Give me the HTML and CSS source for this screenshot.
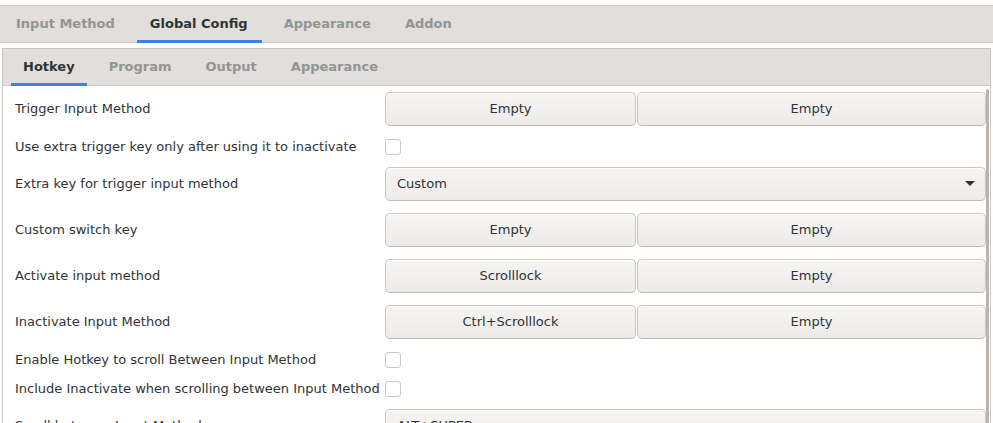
FILE: index.html
```html
<!DOCTYPE html>
<html>
<head>
<meta charset="utf-8">
<link rel="stylesheet" href="styles.css">
</head>
<body>
<div class="topbar">
  <div class="tab">Input Method</div>
  <div class="tab active wide">Global Config</div>
  <div class="tab">Appearance</div>
  <div class="tab">Addon</div>
</div>
<div class="panel">
  <div class="subbar">
    <div class="tab active">Hotkey</div>
    <div class="tab">Program</div>
    <div class="tab">Output</div>
    <div class="tab">Appearance</div>
  </div>
  <div class="content">
    <div class="form">
      <div class="label">Trigger Input Method</div>
      <div class="keys"><div class="btn first">Empty</div><div class="btn">Empty</div></div>

      <div class="label small">Use extra trigger key only after using it to inactivate</div>
      <div class="check-cell"><div class="check"></div></div>

      <div class="label">Extra key for trigger input method</div>
      <div class="combo"><span>Custom</span><span class="arrow"></span></div>

      <div class="label">Custom switch key</div>
      <div class="keys"><div class="btn first">Empty</div><div class="btn">Empty</div></div>

      <div class="label">Activate input method</div>
      <div class="keys"><div class="btn first">Scrolllock</div><div class="btn">Empty</div></div>

      <div class="label">Inactivate Input Method</div>
      <div class="keys"><div class="btn first">Ctrl+Scrolllock</div><div class="btn">Empty</div></div>

      <div class="label small">Enable Hotkey to scroll Between Input Method</div>
      <div class="check-cell"><div class="check"></div></div>

      <div class="label small">Include Inactivate when scrolling between Input Method</div>
      <div class="check-cell"><div class="check"></div></div>

      <div class="label">Scroll between Input Method</div>
      <div class="combo"><span>ALT+SUPER</span><span class="arrow"></span></div>
    </div>
    <div class="scrollbar"></div>
  </div>
</div>
</body>
</html>
```
FILE: styles.css
```css
html, body {
  margin: 0;
  padding: 0;
  background: #ffffff;
  height: 423px;
  overflow: hidden;
}
body {
  font-family: "DejaVu Sans", sans-serif;
  font-size: 13px;
  color: #2e3436;
}
.topbar {
  margin-top: 5px;
  height: 37px;
  border-top: 1px solid #cdc7c2;
  background: #e1dedb;
  box-shadow: inset 0 -1px 0 #cdc7c2;
  display: flex;
  gap: 10px;
  padding-left: 4px;
}
.tab {
  box-sizing: border-box;
  display: flex;
  align-items: center;
  padding: 0 12px 2px 12px;
  font-weight: bold;
  color: #929595;
}
.tab.wide {
  padding: 0 14px 2px 13px;
}
.tab.active {
  color: #2e3436;
  box-shadow: inset 0 -3px 0 #3584e4;
}
.panel {
  margin: 5px 2px 0 2px;
  border: 1px solid #cdc7c2;
  border-bottom: none;
  height: 380px;
  overflow: hidden;
}
.subbar {
  height: 37px;
  background: #e1dedb;
  box-shadow: inset 0 -1px 0 #cdc7c2;
  display: flex;
  gap: 10px;
  padding-left: 8px;
}
.content {
  position: relative;
  padding: 6px 4px 0 12px;
}
.form {
  display: grid;
  grid-template-columns: 364px 1fr;
  column-gap: 6px;
  row-gap: 12px;
  align-items: center;
}
.label {
  white-space: nowrap;
  padding-bottom: 2px;
}
.label.small {
  padding-bottom: 0;
}
.keys {
  display: flex;
  gap: 1px;
  height: 34px;
}
.btn {
  box-sizing: border-box;
  height: 34px;
  flex: 1;
  display: flex;
  align-items: center;
  justify-content: center;
  padding-bottom: 2px;
  border: 1px solid #cdc7c2;
  border-bottom-color: #bfb8b1;
  border-radius: 5px;
  background: linear-gradient(to bottom, #f6f5f4, #edebe9);
  box-shadow: inset 0 1px 0 #ffffff;
}
.btn.first {
  flex: 0 0 251px;
}
.check-cell {
  height: 17px;
  display: flex;
  align-items: center;
}
.check {
  box-sizing: border-box;
  width: 16px;
  height: 16px;
  border: 1px solid #cdc7c2;
  border-radius: 3px;
  background: #ffffff;
}
.combo {
  box-sizing: border-box;
  height: 34px;
  display: flex;
  align-items: center;
  justify-content: space-between;
  padding: 0 10px 2px 11px;
  border: 1px solid #cdc7c2;
  border-bottom-color: #bfb8b1;
  border-radius: 5px;
  background: linear-gradient(to bottom, #f6f5f4, #edebe9);
  box-shadow: inset 0 1px 0 #ffffff;
}
.arrow {
  width: 0;
  height: 0;
  border-left: 5px solid transparent;
  border-right: 5px solid transparent;
  border-top: 5px solid #2e3436;
}
.scrollbar {
  position: absolute;
  top: 3px;
  right: 1px;
  width: 3px;
  height: 400px;
  background: #b8b5b2;
  border-radius: 2px;
}
```
